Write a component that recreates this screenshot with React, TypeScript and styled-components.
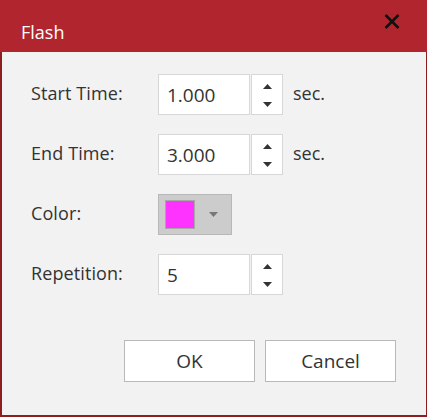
import * as React from 'react'
import styled, { createGlobalStyle } from 'styled-components'

const GlobalStyle = createGlobalStyle`
  html, body {
    margin: 0;
    padding: 0;
    background: #ffffff;
  }
  body {
    font-family: 'Open Sans', 'Liberation Sans', sans-serif;
  }
`

const Dialog = styled.div`
  width: 427px;
  height: 417px;
  box-sizing: border-box;
  border: 1px solid #8e1d22;
  border-top: none;
  border-bottom-width: 2px;
  border-left-width: 2px;
  display: flex;
  flex-direction: column;
  background: #f2f2f2;
`

const TitleBar = styled.div`
  height: 52px;
  margin: 0 -1px 0 -2px;
  padding: 0 27px 0 21px;
  background: #b1262e;
  display: flex;
  align-items: center;
  justify-content: space-between;
  flex-shrink: 0;
`

const Title = styled.div`
  color: #ffffff;
  font-size: 18px;
  margin-top: 12px;
`

const CloseButton = styled.div`
  width: 16px;
  height: 16px;
  margin-bottom: 10px;
  display: flex;
  align-items: center;
  justify-content: center;
`

const Body = styled.div`
  flex: 1;
  padding: 22px 0 0 29px;
  display: flex;
  flex-direction: column;
`

const Form = styled.div`
  display: grid;
  grid-template-columns: 127px max-content 1fr;
  grid-auto-rows: 41px;
  row-gap: 19px;
  align-items: center;
  justify-items: start;
`

const Label = styled.div`
  font-size: 18px;
  color: #333333;
  margin-bottom: 4px;
  letter-spacing: 0.1px;
`

const Spin = styled.div`
  display: flex;
  height: 41px;
  gap: 1px;
`

const Field = styled.div`
  width: 92px;
  box-sizing: border-box;
  border: 1px solid #d7d7d7;
  background: #ffffff;
  font-size: 19px;
  color: #333333;
  padding-left: 8px;
  display: flex;
  align-items: center;
`

const Arrows = styled.div`
  width: 32px;
  box-sizing: border-box;
  border: 1px solid #d7d7d7;
  background: #ffffff;
  display: flex;
  flex-direction: column;
  align-items: center;
  justify-content: space-between;
  padding: 9px 0 7px;
`

const Unit = styled.div`
  font-size: 18px;
  color: #333333;
  margin-left: 10px;
  margin-bottom: 3px;
`

const ColorPicker = styled.div`
  width: 74px;
  height: 41px;
  box-sizing: border-box;
  border: 1px solid #b8b8b8;
  background: #cccccc;
  display: flex;
  align-items: center;
  padding-left: 6px;
  gap: 14px;
`

const Swatch = styled.div<{ $color: string }>`
  width: 30px;
  height: 29px;
  box-sizing: border-box;
  border: 1px solid #a8a8a8;
  background: ${(p) => p.$color};
`

const Footer = styled.div`
  display: flex;
  justify-content: flex-end;
  gap: 10px;
  margin-top: 45px;
  padding-right: 30px;
`

const Button = styled.button`
  width: 131px;
  height: 42px;
  box-sizing: border-box;
  border: 1px solid #b9b9b9;
  background: #ffffff;
  font-family: 'Open Sans', 'Liberation Sans', sans-serif;
  font-size: 19px;
  color: #333333;
  padding: 0;
`

const Triangle = ({ up, color = '#333' }: { up?: boolean; color?: string }) => (
  <svg width="9" height="5" viewBox="0 0 9 5">
    <path d={up ? 'M0 5 L4.5 0 L9 5 Z' : 'M0 0 L4.5 5 L9 0 Z'} fill={color} />
  </svg>
)

const Spinner = ({ value }: { value: string }) => (
  <Spin>
    <Field>{value}</Field>
    <Arrows>
      <Triangle up />
      <Triangle />
    </Arrows>
  </Spin>
)

const App = () => {
  return (
    <>
      <GlobalStyle />
      <Dialog>
        <TitleBar>
          <Title>Flash</Title>
          <CloseButton>
            <svg width="16" height="15" viewBox="0 0 16 15">
              <path d="M1.5 1 L14.5 14 M14.5 1 L1.5 14" stroke="#111" strokeWidth="2.6" />
            </svg>
          </CloseButton>
        </TitleBar>
        <Body>
          <Form>
            <Label>Start Time:</Label>
            <Spinner value="1.000" />
            <Unit>sec.</Unit>
            <Label>End Time:</Label>
            <Spinner value="3.000" />
            <Unit>sec.</Unit>
            <Label>Color:</Label>
            <ColorPicker>
              <Swatch $color="#ff33ff" />
              <Triangle color="#777" />
            </ColorPicker>
            <div />
            <Label>Repetition:</Label>
            <Spinner value="5" />
            <div />
          </Form>
          <Footer>
            <Button>OK</Button>
            <Button>Cancel</Button>
          </Footer>
        </Body>
      </Dialog>
    </>
  )
}

export default App
